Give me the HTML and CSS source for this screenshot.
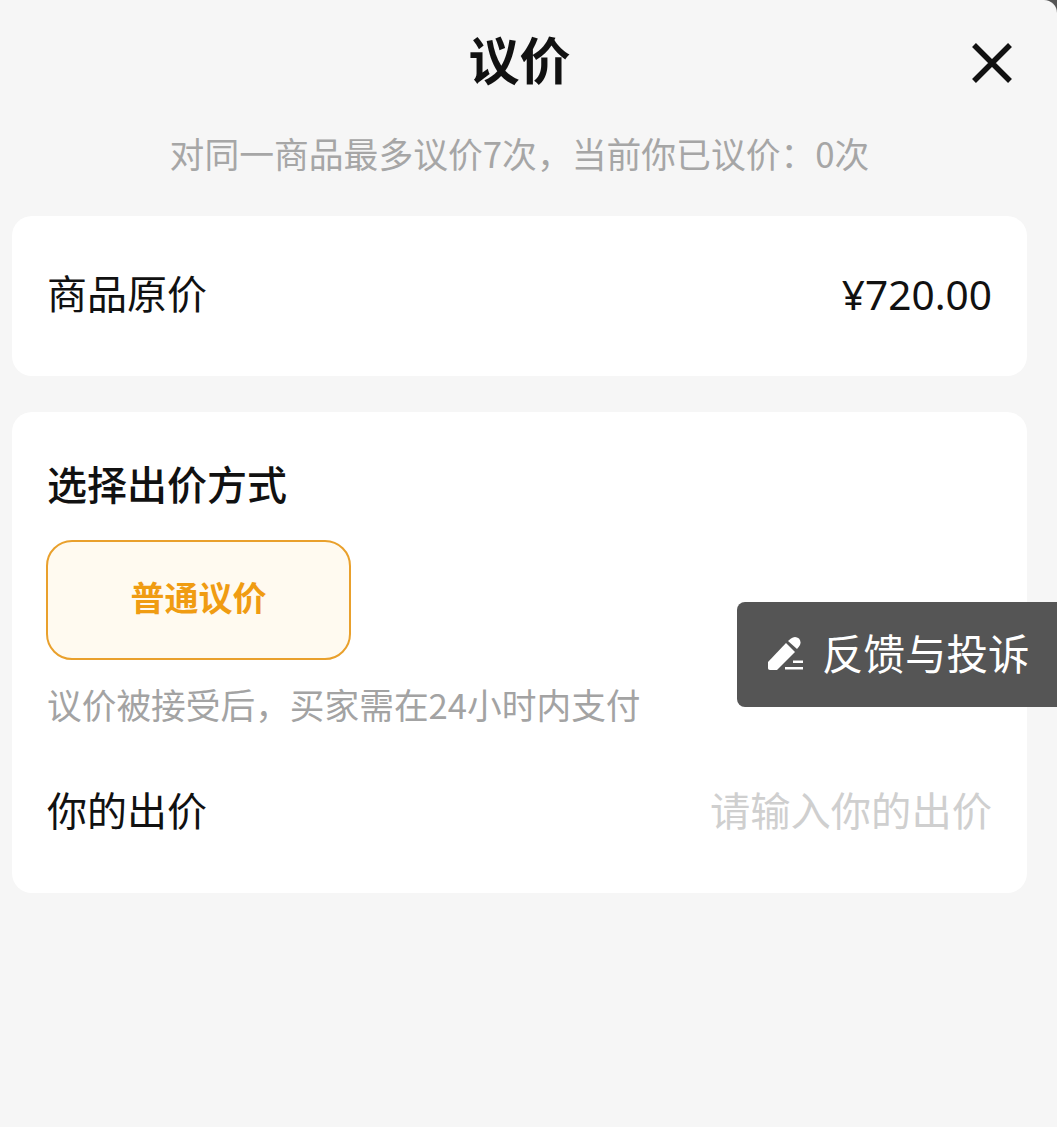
FILE: index.html
```html
<!DOCTYPE html>
<html lang="zh-CN">
<head>
<meta charset="utf-8">
<title>议价</title>
<link rel="stylesheet" href="styles.css">
</head>
<body>
<main class="sheet">
  <header class="header">
    <h1 class="title">议价</h1>
    <button class="close" aria-label="关闭">
      <svg width="42" height="42" viewBox="0 0 42 42"><path d="M3 3 39 39M39 3 3 39" fill="none" stroke="#111" stroke-width="5.5"/></svg>
    </button>
  </header>
  <p class="hint">对同一商品最多议价7次，当前你已议价：0次</p>
  <section class="card card-price">
    <div class="row">
      <span class="label">商品原价</span>
      <span class="price">¥720.00</span>
    </div>
  </section>
  <section class="card card-offer">
    <h2 class="heading">选择出价方式</h2>
    <div class="option"><span class="option-text">普通议价</span></div>
    <p class="note">议价被接受后，买家需在24小时内支付</p>
    <div class="row row-offer">
      <span class="label">你的出价</span>
      <span class="placeholder">请输入你的出价</span>
    </div>
  </section>
  <aside class="feedback">
    <svg class="pen" width="36" height="34" viewBox="0 0 36 34">
      <path d="M0 25 18 6 27 15 9 33H2C.7 33 0 32.300 0 31Z" fill="#fff"/>
      <path d="M20 4 23 1.500C25.500-.5 28.500-.5 31 1.500 33 4 33 7 31 9.500L29 12Z" fill="#fff"/>
      <path d="M25 23.500H35V26H25ZM17 30H35V32.500H17Z" fill="#fff"/>
    </svg>
    <span class="feedback-text">反馈与投诉</span>
  </aside>
</main>
</body>
</html>
```
FILE: styles.css
```css
* { box-sizing: border-box; }
html, body { margin: 0; height: 100%; background: #555; overflow: hidden; }
body { font-family: "Noto Sans CJK SC", "Noto Sans", sans-serif; color: #111; }
.sheet {
  position: relative;
  height: 1127px;
  padding: 0 30px 0 12px;
  background: #f6f6f6;
  border-top-right-radius: 13px;
}
.header { position: relative; height: 124px; display: flex; justify-content: center; }
.title { margin: 30px 0 0; font-size: 51px; line-height: 56px; font-weight: 700; }
.close {
  position: absolute; left: 959px; top: 42px;
  padding: 0; border: 0; background: none; display: block; line-height: 0;
}
.hint { margin: 0; height: 92px; padding-top: 8px; text-align: center; font-size: 34.8px; line-height: 42px; color: #a6a6a6; white-space: nowrap; }
.card { width: 1015px; background: #fff; border-radius: 20px; padding: 0 35px; }
.card-price { height: 160px; padding-top: 48px; margin-bottom: 36px; }
.card-offer { height: 481px; padding-top: 43px; }
.row { display: flex; justify-content: space-between; align-items: center; height: 56px; }
.label { font-size: 40px; line-height: 56px; }
.price { margin-top: 6px; font-size: 40.6px; line-height: 56px; font-family: "Noto Sans", sans-serif; }
.heading { margin: 0; font-size: 40px; line-height: 56px; font-weight: 500; }
.option {
  margin: 29px 0 0 -1px; width: 305px; height: 120px; padding-bottom: 7px;
  display: flex; align-items: center; justify-content: center;
  border: 2px solid #e9a02c; border-radius: 26px; background: #fffaf0;
  color: #f09c12; font-size: 34px; font-weight: 700;
}
.note { margin: 21px 0 0; font-size: 34.7px; line-height: 46px; color: #a3a3a3; white-space: nowrap; }
.row-offer { margin-top: 54px; }
.placeholder { font-size: 40.3px; line-height: 56px; color: #cfcfcf; }
.feedback {
  position: absolute; left: 737px; top: 602px; width: 320px; height: 105px;
  display: flex; align-items: center; gap: 18px; padding: 0 0 2px 31px;
  background: #555; border-radius: 8px 0 0 8px;
  color: #fff; font-size: 41.5px; white-space: nowrap;
}
.feedback-text { margin-top: -4px; }
.pen { flex: none; }
```
